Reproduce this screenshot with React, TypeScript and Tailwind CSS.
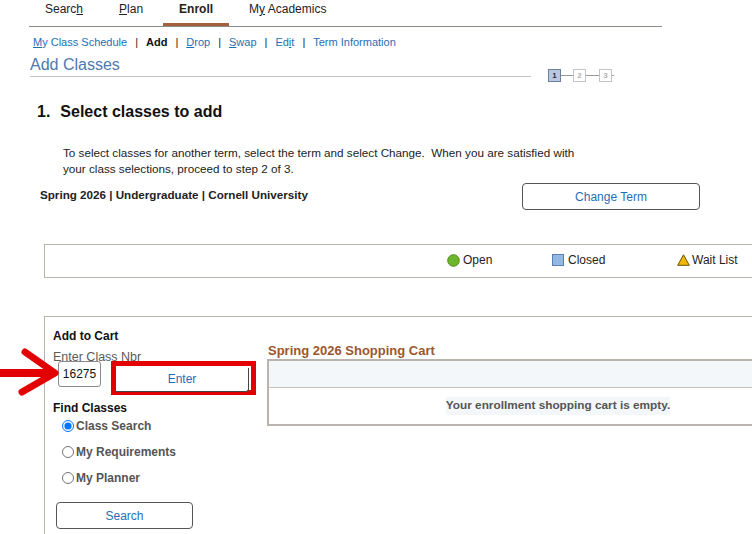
import React from 'react';

const tabs = [
  { label: 'Search', key: 'h', active: false },
  { label: 'Plan', key: 'P', active: false },
  { label: 'Enroll', key: '', active: true },
  { label: 'My Academics', key: 'y', active: false },
];

// underline the access key letter, PeopleSoft style
function withKey(label: string, key: string) {
  if (!key) return label;
  const i = label.indexOf(key);
  if (i < 0) return label;
  return (
    <>
      {label.slice(0, i)}
      <span className="underline">{key}</span>
      {label.slice(i + 1)}
    </>
  );
}

function Sep() {
  return <span className="mx-[8px] text-[#222]">|</span>;
}

function StepBox({ n, active }: { n: number; active?: boolean }) {
  return (
    <div
      className={
        active
          ? 'w-[13px] h-[13px] border border-[#6d7fa0] bg-[#b7c9de] flex items-center justify-center text-[8px] leading-none font-bold text-[#1e2e5a]'
          : 'w-[13px] h-[13px] border border-[#c4c4c4] bg-white flex items-center justify-center text-[8px] leading-none font-bold text-[#b0b0b0]'
      }
    >
      {n}
    </div>
  );
}

export default function App() {
  return (
    <div className="relative w-[752px] h-[534px] overflow-hidden bg-white text-[#222] font-['Liberation_Sans',Arial,sans-serif]">
      {/* top tabs */}
      <div className="ml-[29px] w-[633px] h-[27px] border-b border-[#8c8c84] flex gap-1">
        {tabs.map((t) => (
          <div
            key={t.label}
            className={
              t.active
                ? 'h-full px-4 pt-[2px] text-[12px] leading-[14px] font-bold border-b-[3px] border-[#a2613c]'
                : 'h-full px-4 pt-[2px] text-[12px] leading-[14px]'
            }
          >
            {withKey(t.label, t.key)}
          </div>
        ))}
      </div>

      {/* sub menu */}
      <div className="ml-[33px] mt-[9px] flex text-[11px] leading-[13px] text-[#1f6fb5]">
        <span><span className="underline">M</span>y Class Schedule</span>
        <Sep />
        <span className="font-bold text-[#111]">Add</span>
        <Sep />
        <span><span className="underline">D</span>rop</span>
        <Sep />
        <span><span className="underline">S</span>wap</span>
        <Sep />
        <span>Ed<span className="underline">i</span>t</span>
        <Sep />
        <span>Term Information</span>
      </div>

      {/* page title + steps */}
      <div className="ml-[30px] mt-[6px] h-[22px] flex items-start">
        <div className="w-[501px] pt-[1px] pb-[2px] border-b border-[#c4c4c4] text-[16px] leading-[18px] text-[#4d79ac]">
          Add Classes
        </div>
        <div className="ml-[17px] mt-[14px] flex items-center">
          <StepBox n={1} active />
          <div className="w-[12px] h-px bg-[#999]" />
          <StepBox n={2} />
          <div className="w-[13px] h-px bg-[#999]" />
          <StepBox n={3} />
          <div className="w-[2px] h-px bg-[#999]" />
        </div>
      </div>

      <div className="ml-[37px] mt-[25px] flex gap-[10px] text-[16px] leading-[19px] font-bold text-[#111]">
        <span>1.</span>
        <span>Select classes to add</span>
      </div>

      <p className="ml-[63px] mt-[24px] text-[11.7px] leading-[16px] text-[#222]">
        To select classes for another term, select the term and select Change.&nbsp; When you are satisfied with
        <br />
        your class selections, proceed to step 2 of 3.
      </p>

      <div className="ml-[40px] mt-[6px] flex items-start">
        <div className="w-[482px] pt-[5px] text-[11.65px] leading-[14px] font-bold text-[#222]">
          Spring 2026 | Undergraduate | Cornell University
        </div>
        <button className="w-[178px] h-[27px] border border-[#555] rounded-[4px] bg-white text-[12px] text-[#1f6fb5]">
          Change Term
        </button>
      </div>

      {/* legend */}
      <div className="ml-[44px] mt-[34px] w-[730px] h-[34px] border border-[#bab4ae] flex items-center pl-[402px] pb-[2px] text-[12px] text-[#222]">
        <div className="w-[105px] flex items-center gap-[3px]">
          <svg width="13" height="13" viewBox="0 0 13 13">
            <circle cx="6.5" cy="6.5" r="5.8" fill="#6cb52d" stroke="#4f8e1c" strokeWidth="1" />
          </svg>
          <span>Open</span>
        </div>
        <div className="w-[125px] flex items-center gap-[4px]">
          <svg width="12" height="12" viewBox="0 0 12 12">
            <rect x="0.5" y="0.5" width="11" height="11" fill="#93b8e4" stroke="#5c80b2" strokeWidth="1" />
          </svg>
          <span>Closed</span>
        </div>
        <div className="flex items-center gap-[2px]">
          <svg width="13" height="12" viewBox="0 0 13 12">
            <polygon points="6.5,0.8 12.3,11.3 0.7,11.3" fill="#f2b705" stroke="#6b5200" strokeWidth="1" strokeLinejoin="round" />
          </svg>
          <span>Wait List</span>
        </div>
      </div>

      {/* add to cart + shopping cart */}
      <div className="ml-[44px] mt-[38px] w-[760px] h-[240px] border-t border-l border-[#bab4ae] flex">
        <div className="w-[222px] shrink-0 pl-[8px] pt-[12px]">
          <div className="text-[12px] leading-[14px] font-bold text-[#111]">Add to Cart</div>
          <div className="mt-[8px] text-[12.5px] leading-[12px] text-[#5e5a56]">Enter Class Nbr</div>
          <div className="-mt-[2px] flex items-start">
            <div className="ml-[5px] w-[43px] h-[26px] border border-[#8a8a8a] rounded-[3px] flex items-center justify-center text-[12px] text-[#111] bg-white">
              16275
            </div>
            <div className="ml-[10px] w-[145px] h-[34px] border-[5px] border-[#e30000] bg-white">
              <button className="w-[133px] h-[24px] border border-[#444] border-t-0 border-l-0 rounded-br-[3px] bg-white text-[12px] text-[#1f6fb5]">
                Enter
              </button>
            </div>
          </div>
          <div className="mt-[6px] text-[12px] leading-[14px] font-bold text-[#111]">Find Classes</div>
          <div className="-mt-[2px] pl-[9px]">
            {['Class Search', 'My Requirements', 'My Planner'].map((r, i) => (
              <label key={r} className="h-[26px] flex items-center gap-[2px] text-[12px] font-bold text-[#555]">
                <input
                  type="radio"
                  name="find"
                  defaultChecked={i === 0}
                  className="m-0 w-[12px] h-[12px]"
                />
                {r}
              </label>
            ))}
          </div>
          <button className="ml-[3px] mt-[11px] w-[137px] h-[27px] border border-[#555] rounded-[4px] bg-white text-[12px] text-[#1f6fb5]">
            Search
          </button>
        </div>

        <div className="pt-[26px]">
          <div className="pl-[1px] text-[13px] leading-[15px] font-bold text-[#9a582c]">Spring 2026 Shopping Cart</div>
          <div className="mt-[1px] w-[582px] border-2 border-[#bab4ae]">
            <div className="h-[27px] bg-[#f4f7f9] border-b border-[#c6c2be]" />
            <div className="h-[36px] flex items-center justify-center">
              <span className="bg-[#f4f7f9] text-[11.8px] font-bold text-[#555]">
                Your enrollment shopping cart is empty.
              </span>
            </div>
          </div>
        </div>
      </div>

      {/* red annotation arrow */}
      <svg className="absolute left-0 top-[346px]" width="62" height="52" viewBox="0 0 62 52">
        <path d="M0 27 L50 27" stroke="#e30000" strokeWidth="8" strokeLinecap="round" fill="none" />
        <path d="M25 6 L55 27 L22 46" stroke="#e30000" strokeWidth="7" strokeLinecap="round" strokeLinejoin="round" fill="none" />
      </svg>
    </div>
  );
}
